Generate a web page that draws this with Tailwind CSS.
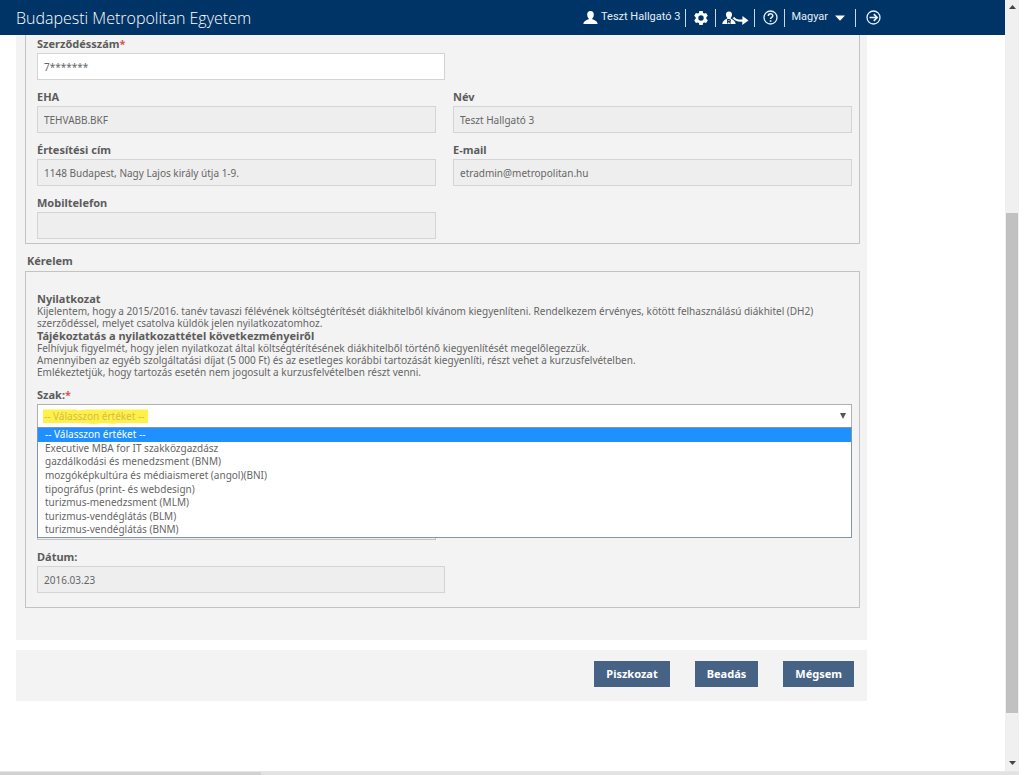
<!DOCTYPE html>
<html lang="hu">
<head>
<meta charset="utf-8">
<title>Budapesti Metropolitan Egyetem</title>
<script src="https://cdn.jsdelivr.net/npm/@tailwindcss/browser@4"></script>
</head>
<body class="flex h-screen flex-col overflow-hidden bg-white pr-[5px] font-['Noto_Sans',sans-serif] text-[10px] text-[#666666]">
<div class="flex min-h-0 flex-1">
  <div class="min-w-0 flex-1 overflow-hidden">
    <header class="h-[35px] bg-[#003366] text-[#e3f0fa]">
      <div class="flex h-full max-w-[881px] items-center justify-between pl-4">
        <h1 class="font-['Open_Sans',sans-serif] text-base leading-[34px] font-light text-white">Budapesti Metropolitan Egyetem</h1>
        <nav class="flex h-[34px] items-center font-['Roboto',sans-serif] text-[11px] whitespace-nowrap">
          <a href="#" class="flex items-center gap-[3px]">
            <svg class="h-[15px] w-[15px]" viewBox="0 0 15 15" fill="#fff"><path d="M7.500 1C5 1 4 2.800 4.200 5c.1 1.500.7 2.600 1.500 3.300v.9C4 10 .7 10.500.4 14h14.200c-.3-3.500-3.600-4-5.300-4.800v-.9c.8-.7 1.400-1.800 1.500-3.300C11 2.800 10 1 7.500 1z"/></svg>
            <span>Teszt Hallgató 3</span>
          </a>
          <span class="ml-[5px] h-[18px] w-px bg-[#c9d8e6]"></span>
          <button type="button" aria-label="Beállítások" class="ml-2">
            <svg class="h-[14px] w-[14px]" viewBox="0 0 14 14"><path fill="#fff" fill-rule="evenodd" d="M5.300 0h3.400l.4 1.900 1.100.6 1.900-.6 1.700 2.900-1.500 1.400v1.600l1.500 1.400-1.700 2.900-1.900-.6-1.100.6-.4 1.900H5.300l-.4-1.900-1.100-.6-1.900.6L.2 9.200l1.500-1.400V6.200L.2 4.800l1.700-2.900 1.900.6 1.100-.6zM7 4.300a2.700 2.700 0 1 0 0 5.400 2.700 2.700 0 0 0 0-5.400z"/></svg>
          </button>
          <span class="ml-[7px] h-[18px] w-px bg-[#c9d8e6]"></span>
          <button type="button" aria-label="Szerepkörváltás" class="ml-1.5">
            <svg class="h-[16px] w-[27px]" viewBox="0 0 27 16"><path fill="#fff" d="M7 1.500C4.800 1.500 3.800 3 4 5c.1 1.200.6 2 1.300 2.700v.8C3.800 9.200.6 10.500.3 14h13.400c-.2-2.800-2.400-4.300-5-5.500v-.8C9.400 7 9.900 6.200 10 5c.2-2-.8-3.500-3-3.500z"/><path fill="none" stroke="#003366" stroke-width="1.200" d="M5.700 13.500V9.600h1.600c1.500 0 1.500 2 0 2H5.700m1.600 0 1.200 1.900"/><path fill="none" stroke="#fff" stroke-width="2.200" d="M11.500 7.500c2 3 5.500 3.500 10 3"/><path fill="#fff" d="m20.500 6 6 4.500-6.300 4.500z"/></svg>
          </button>
          <span class="ml-[5px] h-[18px] w-px bg-[#c9d8e6]"></span>
          <button type="button" aria-label="Súgó" class="ml-2">
            <svg class="h-[15px] w-[15px]" viewBox="0 0 15 15" fill="none" stroke="#e6f1fb" stroke-width="1.300"><circle cx="7.500" cy="7.500" r="6.500"/><path stroke-width="1.500" d="M5.300 6c0-3 4.500-2.900 4.500-.3C9.800 7.400 7.600 7.300 7.600 9"/><path stroke-width="1.600" d="M7.600 10.200v1.600"/></svg>
          </button>
          <span class="ml-[6px] h-[18px] w-px bg-[#c9d8e6]"></span>
          <button type="button" class="ml-1.5 flex items-center gap-[7px]">
            <span>Magyar</span>
            <svg class="h-[6px] w-[10px]" viewBox="0 0 10 6" fill="#fff"><path d="M0 .5h10L5 5.800z"/></svg>
          </button>
          <span class="ml-2.5 h-[18px] w-px bg-[#c9d8e6]"></span>
          <a href="#" aria-label="Kilépés" class="ml-2.5">
            <svg class="h-[15px] w-[15px]" viewBox="0 0 15 15" fill="none" stroke="#e6f1fb" stroke-width="1.300"><circle cx="7.500" cy="7.500" r="6.500"/><path stroke-width="1.700" d="M3.500 7.500h7.300M7.800 4.200l3.300 3.300-3.300 3.300"/></svg>
          </a>
        </nav>
      </div>
    </header>

    <main class="ml-4 max-w-[851px]">
      <form>
        <div class="bg-[#f3f3f3] pr-[7px] pb-8 pl-[9px]">
          <section class="flex flex-col gap-2.5 border border-t-0 border-[#c3c3c3] pt-0.5 pr-[7px] pb-1 pl-[11px]">
            <div class="max-w-[408px]">
              <label for="szerz" class="block h-4 text-[11px] leading-[14px] font-bold text-[#5c5c5c]">Szerződésszám<span class="text-[#d9534a]">*</span></label>
              <input id="szerz" value="7*******" class="block h-[27px] w-full border border-[#d4d4d4] bg-white px-1.5">
            </div>
            <div class="grid grid-cols-2 gap-x-[17px] gap-y-2.5">
              <div>
                <label for="eha" class="block h-4 text-[11px] leading-[14px] font-bold text-[#5c5c5c]">EHA</label>
                <input id="eha" readonly value="TEHVABB.BKF" class="block h-[27px] w-full border border-[#d4d4d4] bg-[#eeeeee] px-1.5">
              </div>
              <div>
                <label for="nev" class="block h-4 text-[11px] leading-[14px] font-bold text-[#5c5c5c]">Név</label>
                <input id="nev" readonly value="Teszt Hallgató 3" class="block h-[27px] w-full border border-[#d4d4d4] bg-[#eeeeee] px-1.5">
              </div>
              <div>
                <label for="cim" class="block h-4 text-[11px] leading-[14px] font-bold text-[#5c5c5c]">Értesítési cím</label>
                <input id="cim" readonly value="1148 Budapest, Nagy Lajos király útja 1-9." class="block h-[27px] w-full border border-[#d4d4d4] bg-[#eeeeee] px-1.5">
              </div>
              <div>
                <label for="mail" class="block h-4 text-[11px] leading-[14px] font-bold text-[#5c5c5c]">E-mail</label>
                <input id="mail" readonly value="etradmin@metropolitan.hu" class="block h-[27px] w-full border border-[#d4d4d4] bg-[#eeeeee] px-1.5">
              </div>
              <div>
                <label for="mobil" class="block h-4 text-[11px] leading-[14px] font-bold text-[#5c5c5c]">Mobiltelefon</label>
                <input id="mobil" readonly class="block h-[27px] w-full border border-[#d4d4d4] bg-[#eeeeee] px-1.5">
              </div>
            </div>
          </section>

          <h2 class="h-[27px] pt-[9px] pl-0.5 text-[11px] leading-4 font-bold text-[#5c5c5c]">Kérelem</h2>
          <section class="border border-[#c3c3c3] pt-5 pr-[7px] pb-3.5 pl-[11px]">
            <h3 class="text-[11px] leading-[13px] font-bold text-[#5c5c5c]">Nyilatkozat</h3>
            <p class="leading-3">Kijelentem, hogy a 2015/2016. tanév tavaszi félévének költségtérítését diákhitelből kívánom kiegyenlíteni. Rendelkezem érvényes, kötött felhasználású diákhitel (DH2) szerződéssel, melyet csatolva küldök jelen nyilatkozatomhoz.</p>
            <h3 class="text-[11px] leading-[13px] font-bold text-[#5c5c5c]">Tájékoztatás a nyilatkozattétel következményeiről</h3>
            <p class="leading-3">Felhívjuk figyelmét, hogy jelen nyilatkozat által költségtérítésének diákhitelből történő kiegyenlítését megelőlegezzük.<br>Amennyiben az egyéb szolgáltatási díjat (5 000 Ft) és az esetleges korábbi tartozását kiegyenlíti, részt vehet a kurzusfelvételben.<br>Emlékeztetjük, hogy tartozás esetén nem jogosult a kurzusfelvételben részt venni.</p>

            <label for="szak" class="mt-2 block h-[18px] text-[11px] leading-[18px] font-bold text-[#5c5c5c]">Szak:<span class="text-[#d9534a]">*</span></label>
            <div class="relative">
              <div class="relative h-[24px] border border-[#b0b0b0] bg-white">
                <svg class="absolute top-[4px] left-[5px] h-[15px] w-[105px]" viewBox="0 0 105 15" fill="#fff04a"><path d="M0 .5h33l2 1 8-1h62v13.500H75l-5 1-8-1-12 1-10-1H0z"/></svg>
                <select id="szak" class="relative block h-full w-full appearance-none bg-transparent px-1.5 text-[#d3bd48]"><option>-- Válasszon értéket --</option></select>
                <svg class="pointer-events-none absolute top-2 right-[5px] h-[6px] w-[6px]" viewBox="0 0 6 6" fill="#555"><path d="M0 0h6L3 6z"/></svg>
              </div>
              <ul role="listbox" aria-label="Szak" class="absolute inset-x-0 top-[23px] grid h-[111px] auto-rows-fr border border-[#8296ab] bg-white leading-[13px]">
                <li role="option" aria-selected="true" class="bg-[#1e90ff] px-[7px] text-white">-- Válasszon értéket --</li>
                <li role="option" class="px-[7px]">Executive MBA for IT szakközgazdász</li>
                <li role="option" class="px-[7px]">gazdálkodási és menedzsment (BNM)</li>
                <li role="option" class="px-[7px]">mozgóképkultúra és médiaismeret (angol)(BNI)</li>
                <li role="option" class="px-[7px]">tipográfus (print- és webdesign)</li>
                <li role="option" class="px-[7px]">turizmus-menedzsment (MLM)</li>
                <li role="option" class="px-[7px]">turizmus-vendéglátás (BLM)</li>
                <li role="option" class="px-[7px]">turizmus-vendéglátás (BNM)</li>
              </ul>
            </div>
            <div class="mt-[85px] grid grid-cols-2 gap-x-[17px]">
              <input aria-label="Képzés" readonly class="block h-[27px] w-full border border-[#c3c3c3] bg-[#eeeeee] px-1.5">
            </div>
            <div class="mt-2.5 max-w-[408px]">
              <label for="datum" class="block h-4 text-[11px] leading-[14px] font-bold text-[#5c5c5c]">Dátum:</label>
              <input id="datum" readonly value="2016.03.23" class="block h-[27px] w-full border border-[#d4d4d4] bg-[#eeeeee] px-1.5">
            </div>
          </section>
        </div>
        <div class="mt-2.5 flex justify-end gap-[25px] bg-[#f3f3f3] pt-[11px] pr-[13px] pb-3.5 text-[11px] text-white">
          <button type="button" class="h-[26px] bg-[#466284] px-3 font-bold">Piszkozat</button>
          <button type="button" class="h-[26px] bg-[#466284] px-3 font-bold">Beadás</button>
          <button type="button" class="h-[26px] bg-[#466284] px-3 font-bold">Mégsem</button>
        </div>
      </form>
    </main>
  </div>

  <div aria-hidden="true" class="flex w-[14px] flex-col items-center bg-[#f0f0f0]">
    <svg class="mt-[5px] h-[4px] w-[7px]" viewBox="0 0 7 4" fill="#444"><path d="M0 4h7L3.500 0z"/></svg>
    <div class="mt-[204px] h-[500px] w-3 bg-[#c1c1c1]"></div>
    <svg class="mt-auto mb-[6px] h-[4px] w-[7px]" viewBox="0 0 7 4" fill="#444"><path d="M0 0h7L3.500 4z"/></svg>
  </div>
</div>
<div class="flex h-1 border-t border-[#e6e6e6] bg-[#e2e2e2]"><div class="w-[261px] bg-[#d2d2d2]"></div></div>
</body>
</html>
